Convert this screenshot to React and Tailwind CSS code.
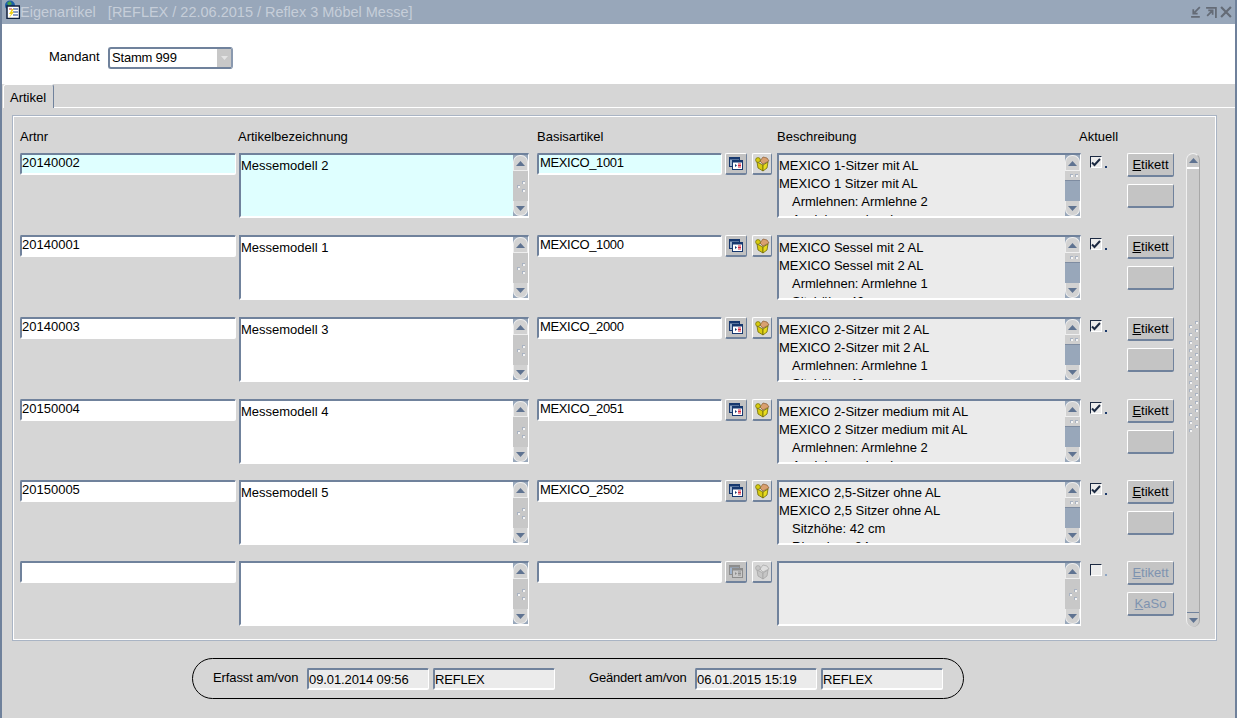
import React from "react";

const Up = ({ c = "#5f7391" }) => (
  <svg width="9" height="5" viewBox="0 0 9 5"><path d="M4.5 0L9 5H0z" fill={c} /></svg>
);
const Down = ({ c = "#5f7391" }) => (
  <svg width="9" height="5" viewBox="0 0 9 5"><path d="M0 0h9L4.5 5z" fill={c} /></svg>
);
const Dot = () => <span className="block w-[3px] h-[3px] bg-[#f4f4f4] border-l border-t border-[#a9b3c2]" />;

function Grip() {
  return (
    <div className="grid grid-cols-2 gap-x-[2px] gap-y-[1px] w-[8px]">
      <span />
      <Dot />
      <Dot />
      <span />
      <span />
      <Dot />
    </div>
  );
}

function MiniScroll({ thumb }) {
  return (
    <div className="w-[15px] h-full shrink-0 bg-[#98a7ba] flex flex-col">
      <div className="h-[15px] shrink-0 bg-[#d2d2d2] rounded-t-[7px] border border-b-0 border-[#eeeeee] flex items-center justify-center border-b-[#5f7391]">
        <Up />
      </div>
      {thumb ? (
        <div className="h-[11px] shrink-0 bg-[#cfcfcf] border-t border-[#f0f0f0] border-b border-b-[#7e8ca1] flex items-center justify-end pr-[2px]">
          <div className="flex gap-[2px] items-end">
            <Dot />
            <Dot />
          </div>
        </div>
      ) : (
        <div className="flex-1 bg-[#c8c8c8] border-t border-[#eeeeee] flex items-center justify-center">
          <Grip />
        </div>
      )}
      {thumb && <div className="flex-1" />}
      <div className="h-[15px] shrink-0 bg-[#d2d2d2] rounded-b-[7px] border border-t-0 border-[#eeeeee] border-t-[#5f7391] flex items-center justify-center">
        <Down />
      </div>
    </div>
  );
}

const inset =
  "border-t-2 border-l-2 border-r border-b-2 border-t-[#70829c] border-l-[#70829c] border-r-white border-b-white";

function TextInput({ value, w, bg = "bg-white", cls = "" }) {
  return (
    <div className={`${w} h-[22px] shrink-0 ${bg} ${inset} rounded-[2px] leading-[16px] text-[13px] text-black whitespace-nowrap overflow-hidden ${cls}`}>
      {value}
    </div>
  );
}

function TextArea({ lines, w, bg, thumb }) {
  return (
    <div className={`${w} h-[65px] shrink-0 ${bg} ${inset} flex`}>
      <div className="flex-1 min-w-0 h-full overflow-hidden pt-[2px] text-[13px] leading-[18px] text-black">
        {lines.map((l, i) => (
          <div key={i} className={`whitespace-nowrap ${l.startsWith(" ") ? "pl-[13px]" : ""}`}>
            {l.trim()}
          </div>
        ))}
      </div>
      <MiniScroll thumb={thumb} />
    </div>
  );
}

function ListIcon({ off }) {
  const a = off ? "#8d8d8d" : "#17386f";
  const b = off ? "#c9c9c9" : "#ffffff";
  const r = off ? "#8d8d8d" : "#d6243a";
  return (
    <svg width="14" height="13" viewBox="0 0 14 13">
      <rect x="0.5" y="0.5" width="10" height="9" fill="#9fb3cc" stroke={a} />
      <rect x="0.5" y="0.5" width="10" height="2" fill={a} />
      <rect x="3.5" y="3.5" width="10" height="9" fill={b} stroke={a} />
      <rect x="3.5" y="3.5" width="10" height="2" fill={a} />
      <path d="M6 7l2 1.5L6 10z" fill={a} />
      <path d="M9 7h3M9 8.5h3M9 10h3" stroke={r} />
    </svg>
  );
}

function BoxIcon({ off }) {
  const y = off ? "#c6c6c6" : "#d8cc10";
  const d = off ? "#a5a5a5" : "#6f6a08";
  const p = off ? "#dedede" : "#d9a070";
  return (
    <svg width="15" height="16" viewBox="0 0 15 16">
      <path d="M5 5l3-4 4 1 2 3-6 3z" fill={p} stroke={off ? d : "#8a5a30"} strokeWidth="0.7" />
      <path d="M2 6l6 3v6l-5-3z" fill={y} stroke={d} strokeWidth="0.8" />
      <path d="M8 9l5-3-1 6-4 3z" fill={off ? y : "#e8dc20"} stroke={d} strokeWidth="0.8" />
      <circle cx="3" cy="4" r="2.4" fill={y} stroke={d} strokeWidth="0.7" />
    </svg>
  );
}

const raised =
  "border-t border-l border-t-white border-l-white border-r border-b-2 border-r-[#70829c] border-b-[#70829c] rounded-[2px]";

function IconBtn({ children, dark, w }) {
  return (
    <div className={`${w} h-[22px] shrink-0 ${dark ? "bg-[#c2c2c2]" : "bg-[#d8d8d8]"} ${raised} flex items-center justify-center`}>
      {children}
    </div>
  );
}

function Btn({ label, mn, off, h }) {
  return (
    <div className={`w-[47px] ${h} bg-[#c4c4c4] ${raised} flex items-center justify-center text-[13px] ${off ? "text-[#7e93b0]" : "text-black"}`}>
      {label && (
        <span>
          <span className="underline">{mn}</span>
          {label}
        </span>
      )}
    </div>
  );
}

function Check({ on }) {
  return (
    <div className="w-[30px] shrink-0 flex items-start pt-[3px] gap-[3px]">
      <div className="w-[12px] h-[12px] bg-[#ececec] border-t border-l border-t-[#1c2a42] border-l-[#1c2a42] border-r border-b border-r-white border-b-white flex items-center justify-center">
        {on && (
          <svg width="10" height="9" viewBox="0 0 10 9">
            <path d="M1 4.5L3.5 7 9 1" fill="none" stroke="#1c2a42" strokeWidth="2" />
          </svg>
        )}
      </div>
      <span className={`w-[2px] h-[2px] mt-[10px] ${on ? "bg-[#1c3a6b]" : "bg-[#8ea6c4]"}`} />
    </div>
  );
}

function Row({ nr = "", name = "", base = "", desc = [], mb, active, empty }) {
  const bg = active ? "bg-[#dfffff]" : "bg-white";
  return (
    <div className={`flex items-start ${mb}`}>
      <TextInput value={nr} w="w-[216px]" bg={bg} cls="mr-[3px]" />
      <TextArea lines={name ? [name] : []} w="w-[290px]" bg={bg} />
      <div className="w-[8px] shrink-0" />
      <TextInput value={base} w="w-[185px]" bg={bg} cls="mr-[3px] pl-[1px] tracking-[-0.35px]" />
      <IconBtn dark w="w-[22px]"><ListIcon off={empty} /></IconBtn>
      <div className="w-[5px] shrink-0" />
      <IconBtn w="w-[20px]"><BoxIcon off={empty} /></IconBtn>
      <div className="w-[5px] shrink-0" />
      <TextArea lines={desc} w="w-[304px]" bg="bg-[#ebebeb]" thumb={!empty} />
      <div className="w-[9px] shrink-0" />
      <Check on={!empty} />
      <div className="w-[7px] shrink-0" />
      <div className="flex flex-col gap-[7px]">
        <Btn label="tikett" mn="E" off={empty} h="h-[24px]" />
        {empty ? <Btn label="aSo" mn="K" off h="h-[24px]" /> : <Btn h="h-[24px]" />}
      </div>
    </div>
  );
}

function BigScroll() {
  const dots = Array.from({ length: 28 });
  return (
    <div className="w-[14px] h-[474px] ml-[12px] bg-[#cbcbcb] rounded-[7px] border-l border-l-[#f0f0f0] border-r border-r-[#a8a8a8] border-t border-t-[#f2f2f2] flex flex-col">
      <div className="h-[15px] shrink-0 border-b-2 border-white rounded-t-[7px] flex items-center justify-center">
        <Up />
      </div>
      <div className="flex-1 flex items-center justify-center pb-[28px]">
        <div className="grid grid-cols-2 gap-x-[1px] gap-y-[1px] w-[9px]">
          {dots.map((_, i) => (
            <span key={i} className={`block w-[3px] h-[3px] bg-[#f4f4f4] border-l border-t border-[#a9b3c2] ${i % 2 ? "ml-[1px]" : "mt-[4px]"}`} />
          ))}
        </div>
      </div>
      <div className="h-[15px] shrink-0 border-t border-[#70829c] rounded-b-[7px] flex items-center justify-center">
        <Down />
      </div>
    </div>
  );
}

const rows = [
  { nr: "20140002", name: "Messemodell 2", base: "MEXICO_1001", active: true, mb: "mb-[17px]", desc: ["MEXICO 1-Sitzer mit AL", "MEXICO 1 Sitzer mit AL", " Armlehnen: Armlehne 2", " Anziehsessel: nein"] },
  { nr: "20140001", name: "Messemodell 1", base: "MEXICO_1000", mb: "mb-[17px]", desc: ["MEXICO Sessel mit 2 AL", "MEXICO Sessel mit 2 AL", " Armlehnen: Armlehne 1", " Sitzhöhe: 42 cm"] },
  { nr: "20140003", name: "Messemodell 3", base: "MEXICO_2000", mb: "mb-[17px]", desc: ["MEXICO 2-Sitzer mit 2 AL", "MEXICO 2-Sitzer mit 2 AL", " Armlehnen: Armlehne 1", " Sitzhöhe: 42 cm"] },
  { nr: "20150004", name: "Messemodell 4", base: "MEXICO_2051", mb: "mb-[16px]", desc: ["MEXICO 2-Sitzer medium mit AL", "MEXICO 2 Sitzer medium mit AL", " Armlehnen: Armlehne 2", " Anziehsessel: nein"] },
  { nr: "20150005", name: "Messemodell 5", base: "MEXICO_2502", mb: "mb-[16px]", desc: ["MEXICO 2,5-Sitzer ohne AL", "MEXICO 2,5 Sitzer ohne AL", " Sitzhöhe: 42 cm", " Rhombus: 84 cm"] },
  { empty: true, mb: "" },
];

export default function App() {
  return (
    <div className="w-[1237px] h-[718px] overflow-hidden flex flex-col bg-[#d6d6d6] border-x-2 border-x-[#6f819b] text-black" style={{ fontFamily: '"Liberation Sans", Arial, sans-serif' }}>
      <div className="h-[24px] shrink-0 -mx-[2px] bg-[#98a7ba] flex items-center pl-[2px] pr-[5px]">
        <svg width="18" height="19" viewBox="0 0 18 19" className="shrink-0 mb-[5px]">
          <circle cx="8" cy="5.5" r="5" fill="#1c5fa8" />
          <path d="M5 3l3-2 2 3-3 2z" fill="#46a04a" />
          <rect x="5" y="6" width="12.5" height="12.5" fill="#fff" stroke="#10213f" strokeWidth="1.5" />
          <path d="M11 9h5M11 12h5M11 15h5" stroke="#1c3f8a" />
          <path d="M7 9h3" stroke="#d62b2b" />
          <path d="M10 9l-3 5h2l-2 4 5-6h-2l2-3z" fill="#f2d21a" />
        </svg>
        <span className="pt-[2px] text-[14.5px] tracking-normal text-[#c6ced9] whitespace-pre">Eigenartikel   [REFLEX / 22.06.2015 / Reflex 3 Möbel Messe]</span>
        <div className="ml-auto flex items-center gap-[3px]">
          <svg width="12" height="12" viewBox="0 0 11 11"><path d="M9 1L4 6M3 3v4h4M1 10h8" fill="none" stroke="#646b76" strokeWidth="1.6" /></svg>
          <svg width="12" height="12" viewBox="0 0 11 11"><path d="M1 1.8h9V11M7 4L2 9M3 4h4v4" fill="none" stroke="#646b76" strokeWidth="1.6" /></svg>
          <svg width="12" height="12" viewBox="0 0 11 11"><path d="M1 1l9 9M10 1l-9 9" fill="none" stroke="#646b76" strokeWidth="2" /></svg>
        </div>
      </div>

      <div className="h-[60px] shrink-0 bg-white flex items-center pl-[47px] pt-[7px]">
        <span className="text-[13px] w-[59px] mb-[2px]">Mandant</span>
        <div className="w-[125px] h-[22px] bg-white border-2 border-[#70829c] border-r-[#8a99af] rounded-[3px] flex items-center pl-[2px] text-[13px] tracking-[-0.2px]">
          <span className="flex-1">Stamm 999</span>
          <span className="w-[14px] h-full bg-[#c8c8c8] flex items-center justify-center">
            <svg width="7" height="4" viewBox="0 0 7 4"><path d="M0 0h7L3.5 4z" fill="#e4e4e4" /></svg>
          </span>
        </div>
      </div>

      <div className="flex-1 flex flex-col min-h-0">
        <div className="h-[24px] shrink-0 flex items-stretch pl-[1px]">
          <div className="w-[51px] h-[24px] bg-[#d6d6d6] border-t border-l border-t-white border-l-white border-r border-r-[#70829c] rounded-t-[3px] pl-[6px] pt-[6px] text-[13px] leading-[14px]">
            Artikel
          </div>
          <div className="flex-1 border-b border-b-white h-[24px]" />
        </div>

        <div className="mt-[7px] ml-[10px] w-[1205px] h-[526px] shrink-0 border border-[#a9b4c4] shadow-[inset_1px_1px_0_#ffffff,inset_-1px_-1px_0_#ffffff] flex flex-col">
          <div className="h-[37px] shrink-0 flex items-end pb-[9px] pl-[7px] text-[13px] leading-[14px]">
            <span className="w-[218px]">Artnr</span>
            <span className="w-[299px]">Artikelbezeichnung</span>
            <span className="w-[240px]">Basisartikel</span>
            <span className="w-[302px]">Beschreibung</span>
            <span>Aktuell</span>
          </div>
          <div className="flex items-start pl-[7px]">
            <div className="flex flex-col">
              {rows.map((r, i) => (
                <Row key={i} {...r} />
              ))}
            </div>
            <BigScroll />
          </div>
        </div>

        <div className="mt-[17px] ml-[190px] w-[772px] h-[41px] shrink-0 rounded-full border border-black flex items-center text-[13px] pl-[20px]">
          <span className="w-[94px] pb-[2px] tracking-[-0.1px]">Erfasst am/von</span>
          <TextInput value="09.01.2014 09:56" w="w-[122px]" bg="bg-[#ebebeb]" cls="mr-[4px] pt-[2px] tracking-[-0.1px]" />
          <TextInput value="REFLEX" w="w-[122px]" bg="bg-[#ebebeb]" cls="pt-[2px] tracking-[-0.2px]" />
          <span className="w-[106px] ml-[34px] pb-[2px] whitespace-nowrap tracking-[-0.2px]">Geändert am/von</span>
          <TextInput value="06.01.2015 15:19" w="w-[122px]" bg="bg-[#ebebeb]" cls="mr-[4px] pt-[2px] tracking-[-0.1px]" />
          <TextInput value="REFLEX" w="w-[122px]" bg="bg-[#ebebeb]" cls="pt-[2px] tracking-[-0.2px]" />
        </div>
      </div>
    </div>
  );
}
